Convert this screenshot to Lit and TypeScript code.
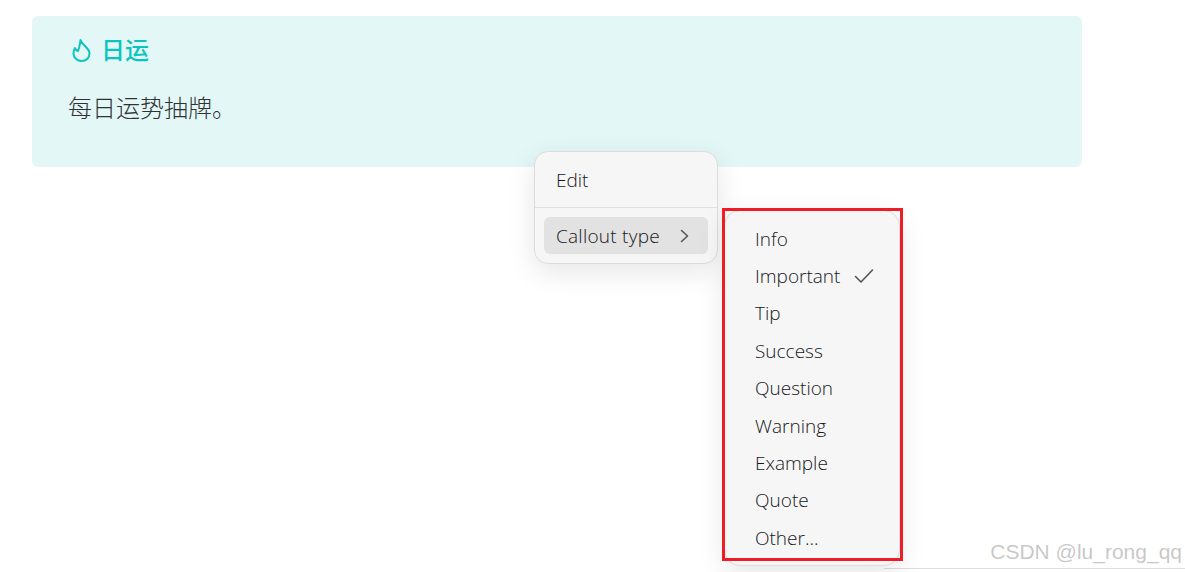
import { LitElement, html, css, svg } from "lit";
import { customElement } from "lit/decorators.js";

const types = ["Info", "Important", "Tip", "Success", "Question", "Warning", "Example", "Quote", "Other..."];

@customElement("app-root")
export class AppRoot extends LitElement {
  static styles = css`
    :host {
      display: block;
      position: relative;
      width: 1185px;
      height: 572px;
      overflow: hidden;
      background: #fff;
      font-family: "Open Sans", "Noto Sans", "Noto Sans CJK SC", sans-serif;
      color: #17181b;
    }
    .page { padding: 16px 103px 0 32px; }
    .callout {
      height: 151px;
      box-sizing: border-box;
      background: #e3f7f6;
      border-radius: 6px;
      padding: 17px 36px;
    }
    .title {
      display: flex;
      align-items: center;
      gap: 9px;
      height: 36px;
      padding-left: 2px;
      color: #0bc4c0;
      font: 500 24px/36px "Noto Sans CJK SC", sans-serif;
    }
    .title svg { display: block; margin-bottom: 2px; }
    .title span { position: relative; top: -2px; }
    .body {
      margin-top: 20px;
      font: 300 24px/36px "Noto Sans CJK SC", sans-serif;
      color: #2f3135;
    }
    .menu {
      position: absolute;
      box-sizing: border-box;
      background: #f6f6f6;
      border: 1px solid #dcdcdc;
      border-radius: 14px;
      box-shadow: 0 8px 28px rgba(0, 0, 0, 0.1);
      font-size: 19px;
      font-weight: 300;
    }
    .main { left: 534px; top: 151px; width: 184px; height: 113px; padding: 9px; }
    .row { display: flex; align-items: center; height: 37px; box-sizing: border-box; }
    .edit { padding-left: 12px; height: 37px; }
    .sep { height: 1px; background: #e0e0e0; margin: 9px -9px; }
    .active {
      background: #e2e2e2;
      border-radius: 6px;
      padding: 0 17px 0 12px;
      justify-content: space-between;
      letter-spacing: 0.25px;
    }
    .sub {
      left: 724px;
      top: 210px;
      width: 176px;
      height: 356px;
      padding: 9px 0 0 30px;
      border-radius: 16px;
    }
    .sub .row { height: 37.4px; justify-content: space-between; padding-right: 25px; }
    .frame {
      position: absolute;
      left: 722px;
      top: 208px;
      width: 181px;
      height: 353px;
      box-sizing: border-box;
      border: 3px solid #ee1c25;
    }
    .edge {
      position: absolute;
      left: 884px;
      top: 568px;
      right: 0;
      height: 1px;
      background: #dedede;
    }
    .mark {
      position: absolute;
      right: 3px;
      top: 539px;
      font: 21px/26px "Liberation Sans", sans-serif;
      color: rgba(130, 130, 130, 0.45);
    }
    svg { flex: none; }
  `;

  render() {
    return html`
      <div class="page">
        <div class="callout">
          <div class="title">
            <svg width="22" height="24" viewBox="0 0 22 24" fill="none" stroke="#0bc4c0" stroke-width="2" stroke-linecap="round" stroke-linejoin="round">
              <path d="M10.500 2C12 7.500 19.500 9.500 19.500 15.500C19.500 20 16 23 11.500 23C7 23 3.500 19.500 3.500 15.500C3.500 13.500 4 11.500 5 10C5.500 11.500 6.500 12.500 8 13C9.500 9.500 10 6 10.500 2Z" />
            </svg>
            <span>日运</span>
          </div>
          <div class="body">每日运势抽牌。</div>
        </div>
      </div>
      <div class="edge"></div>
      <div class="menu main">
        <div class="row edit">Edit</div>
        <div class="sep"></div>
        <div class="row active">
          <span>Callout type</span>
          ${svg`<svg width="12" height="16" viewBox="0 0 12 16" fill="none" stroke="#555" stroke-width="1.600" stroke-linecap="round" stroke-linejoin="round"><path d="M2.500 2.500 8.500 8l-6 5.500"/></svg>`}
        </div>
      </div>
      <div class="menu sub">
        ${types.map(
          (t) => html`<div class="row">
            <span>${t}</span>
            ${t === "Important"
              ? svg`<svg width="20" height="16" viewBox="0 0 20 16" fill="none" stroke="#555" stroke-width="1.600" stroke-linecap="round" stroke-linejoin="round"><path d="M1.500 8.500 7 14 18.500 2"/></svg>`
              : ""}
          </div>`
        )}
      </div>
      <div class="frame"></div>
      <div class="mark">CSDN @lu_rong_qq</div>
    `;
  }
}
